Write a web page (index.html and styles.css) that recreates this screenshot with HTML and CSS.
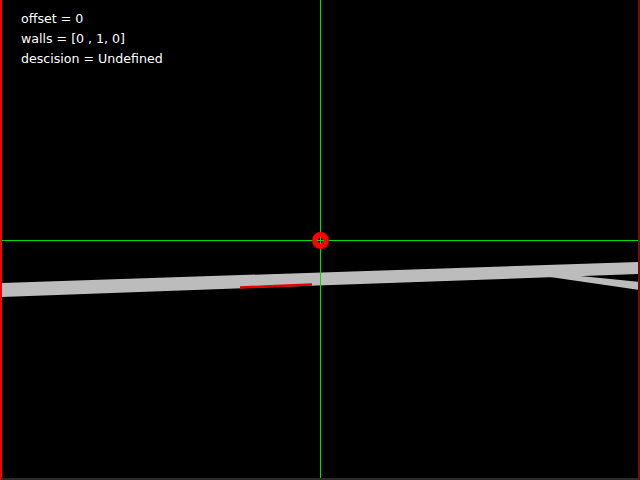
FILE: index.html
```html
<!DOCTYPE html>
<html>
<head>
<meta charset="utf-8">
<link rel="stylesheet" href="styles.css">
</head>
<body>
<div class="frame">
  <svg class="scene" width="640" height="480" viewBox="0 0 640 480">
    <polygon points="0,283 640,262 640,274 0,297" fill="#bcbcbc"/>
    <polygon points="550,273 640,282 640,290 550,277" fill="#bcbcbc"/>
    <polyline points="240,287.5 276,286 312,284.5" fill="none" stroke="#e00000" stroke-width="2.5"/>
    <line x1="320.5" y1="0" x2="320.5" y2="480" stroke="#00e000" stroke-width="1"/>
    <line x1="0" y1="240.5" x2="640" y2="240.5" stroke="#00e000" stroke-width="1"/>
    <circle cx="320.5" cy="240.5" r="5.5" fill="none" stroke="#ff0000" stroke-width="6"/>
    <line x1="320.5" y1="237" x2="320.5" y2="244" stroke="#00e000" stroke-width="1"/>
    <line x1="317" y1="240.5" x2="324" y2="240.5" stroke="#00e000" stroke-width="1"/>
  </svg>
  <div class="info">
    <div class="line">offset = 0</div>
    <div class="line">walls = [0 , 1, 0]</div>
    <div class="line">descision = Undefined</div>
  </div>
</div>
</body>
</html>
```
FILE: styles.css
```css
html, body {
  margin: 0;
  padding: 0;
  background: #000;
}
.frame {
  position: relative;
  width: 640px;
  height: 480px;
  box-sizing: border-box;
  background: #000;
  border-left: 2px solid #ff0000;
  border-right: 2px solid #7a0a0a;
  border-bottom: 2px solid #2a2a2a;
  overflow: hidden;
}
.scene {
  position: absolute;
  left: -2px;
  top: 0;
}
.info {
  position: relative;
  display: flex;
  flex-direction: column;
  padding: 9px 0 0 19px;
  color: #fff;
  font-family: "DejaVu Sans", sans-serif;
  font-size: 12.6px;
  line-height: 20px;
}
.line {
  white-space: pre;
}
```
